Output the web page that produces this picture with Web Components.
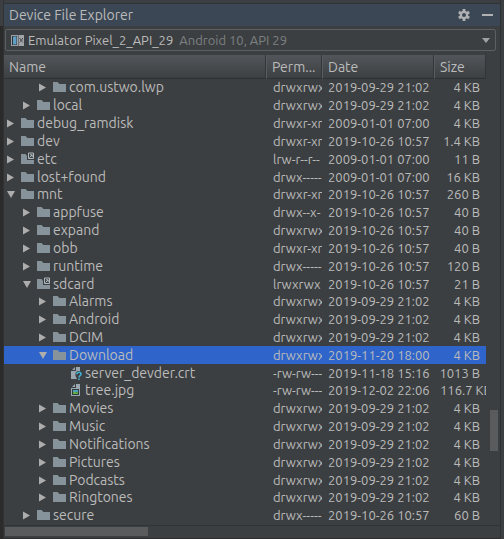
<!DOCTYPE html>
<html lang="en"><head><meta charset="utf-8"><title>Device File Explorer</title>
<style>
html,body{margin:0;height:100%;background:#3c3f41}
</style></head><body>
<device-explorer></device-explorer>
<script>
const FOLDER='<path d="M1 2h4.600l1.800 2H14v8H1z" fill="#87939a"/>';
const ICONS={
folder:FOLDER,
link:'<path d="M1 2h4.600l1.400 2V8h7v4H1z" fill="#87939a"/><path d="M8.500 1h5v5.500h-5z" fill="#3c3f41" stroke="#aeb9c0"/><path d="M9.500 5.500l2.500-2.500M10 2.800h2.200V5" stroke="#aeb9c0" fill="none"/>',
unknown:'<path d="M8 1h4v4H9.500L7.500 7v3L9 13H3V5h5z" fill="#9aa7b0"/><path d="M7 1v3H4z" fill="#9aa7b0"/><path d="M9 8.200c0-2.600 4-2.600 4 0 0 1.500-2 1.500-2 3.300M11 12.500V14" stroke="#3fb0d5" stroke-width="1.600" fill="none"/>',
image:'<path d="M8 1h4v12H3V5h5z" fill="#9aa7b0"/><path d="M7 1v3H4z" fill="#9aa7b0"/><path d="M4 6h7v6H4z" fill="#2f3b3d"/><path d="M5 7h5v2H5z" fill="#4a9fc0"/><path d="M5 11V9.500l1.500-1 2 1L10 9v2z" fill="#62b543"/>'};
class TreeNode extends HTMLElement{
 connectedCallback(){
  const d=+this.getAttribute('depth'),s=this.getAttribute('state'),i=this.getAttribute('icon');
  const arrow=s==='none'?'':`<button aria-label="${s==='open'?'Collapse':'Expand'}"><svg width="8" height="9" viewBox="0 0 8 9"><path d="${s==='open'?'M0 1h8L4 8z':'M0 .5v8l7-4z'}" fill="#adadad"/></svg></button>`;
  this.attachShadow({mode:'open'}).innerHTML=`<style>
  :host{display:flex;align-items:center;padding-left:${3+d*16}px;gap:5px;white-space:nowrap;font-size:14px}
  button,.sp{all:unset;width:8px;display:flex;flex:none}svg{flex:none;display:block}
  .row{display:flex;align-items:center;gap:2px}
  </style>${arrow||'<i class="sp"></i>'}<div class="row"><svg width="15" height="15" viewBox="0 0 15 15">${ICONS[i]}</svg><slot></slot></div>`;
 }}
class ToolHeader extends HTMLElement{
 connectedCallback(){this.attachShadow({mode:'open'}).innerHTML=`<style>
 :host{display:flex;align-items:center;justify-content:space-between;height:22px;padding:0 7px 0 5px;background:#3b4754;font-size:14px}
 h1{font:inherit;margin:0}div{display:flex;gap:12px}button{all:unset;display:flex}</style>
 <h1><slot></slot></h1><div><button aria-label="Settings"><svg width="12" height="12" viewBox="0 0 12 12"><g fill="#afb1b3"><path d="M4.600 0h2.800v12H4.600z"/><path d="M4.600 0h2.800v12H4.600z" transform="rotate(60 6 6)"/><path d="M4.600 0h2.800v12H4.600z" transform="rotate(120 6 6)"/><circle cx="6" cy="6" r="4.300"/></g><circle cx="6" cy="6" r="2" fill="#3b4754"/></svg></button>
 <button aria-label="Hide"><svg width="11" height="12" viewBox="0 0 11 12"><path d="M0 5h11v2H0z" fill="#afb1b3"/></svg></button></div>`}}
class DevicePicker extends HTMLElement{
 connectedCallback(){this.attachShadow({mode:'open'}).innerHTML=`<style>
 :host{display:block;padding:3px 4px 4px 1px}
 button{all:unset;box-sizing:border-box;width:100%;height:22px;display:flex;align-items:center;border:1px solid #5c6063;border-radius:2px;padding:0 5px;gap:4px;white-space:nowrap}
 .dim{color:#7d8082;flex:1;padding-left:2px}</style>
 <button aria-haspopup="listbox"><svg width="13" height="11" viewBox="0 0 13 11"><path d="M0 0h7v11H0z" fill="#9aa0a3"/><path d="M1 1h5v9H1z" fill="#2f3335"/><path d="M2 1.500h3.500v8H2z" fill="#5f9fc4"/><path d="M7.500 0H13v11H7.500z" fill="#a3a6a8"/><path d="M8.500 3l1 1m2.500-1l-1 1M8.500 7.500l1-1m2.500 1l-1-1" stroke="#4a4d4f"/><path d="M9 4h2.500v2.500H9z" fill="#5d6062"/></svg><slot></slot><span class="dim"><slot name="detail"></slot></span><svg width="8" height="5" viewBox="0 0 8 5"><path d="M0 0h8L4 5z" fill="#9fa1a3"/></svg></button>`}}
const A='drwxrwx',R='drwxr-xr',P='drwx-----',D=['2019-09-29 21:02','2009-01-01 07:00','2019-10-26 10:57'];
const ROWS=[
[2,'closed','folder','com.ustwo.lwp',A,D[0],'4 KB'],[1,'closed','folder','local',A,D[0],'4 KB'],
[0,'closed','folder','debug_ramdisk',R,D[1],'4 KB'],[0,'closed','folder','dev',R,D[2],'1.4 KB'],
[0,'closed','link','etc','lrw-r--r--',D[1],'11 B'],[0,'closed','folder','lost+found',P,D[1],'16 KB'],
[0,'open','folder','mnt',R,D[2],'260 B'],[1,'closed','folder','appfuse','drwx--x-',D[2],'40 B'],
[1,'closed','folder','expand',A,D[2],'40 B'],[1,'closed','folder','obb',R,D[2],'40 B'],
[1,'closed','folder','runtime',P,D[2],'120 B'],[1,'open','link','sdcard','lrwxrwx',D[2],'21 B'],
[2,'closed','folder','Alarms',A,D[0],'4 KB'],[2,'closed','folder','Android',A,D[0],'4 KB'],[2,'closed','folder','DCIM',A,D[0],'4 KB'],
[2,'open','folder','Download',A,'2019-11-20 18:00','4 KB'],
[3,'none','unknown','server_devder.crt','-rw-rw---','2019-11-18 15:16','1013 B'],[3,'none','image','tree.jpg','-rw-rw---','2019-12-02 22:06','116.7 KB'],
...['Movies','Music','Notifications','Pictures','Podcasts','Ringtones'].map(n=>[2,'closed','folder',n,A,D[0],'4 KB']),
[1,'closed','folder','secure',P,D[2],'60 B']];
class FileTable extends HTMLElement{
 connectedCallback(){this.attachShadow({mode:'open'}).innerHTML=`<style>
 :host{display:block;min-width:0;min-height:0}
 table{width:100%;height:100%;border-collapse:separate;border-spacing:0;table-layout:fixed}
 col.p{width:56px}col.d{width:112px}col.s{width:52px}
 th{font-weight:400;font-size:14px;line-height:18px;text-align:left;height:24px;padding:0 0 0 5px;background:linear-gradient(#52565a,#3d4042);border-bottom:1px solid #2e3133;border-right:1px solid #333638;box-sizing:border-box}
 th+th{border-left:1px solid #5a5d60}
 td{padding:0 0 0 7px;overflow:hidden;white-space:nowrap;line-height:17px}
 td:first-child{padding:0}td div{overflow:hidden}
 td:nth-child(3){padding-left:6px}
 td:last-child{text-align:right;padding:0 6px 0 0}td.wide:last-child{text-align:left;padding:0 0 0 6px}
 tr.sel td{background:#2f65ca}
 </style><table><colgroup><col><col class="p"><col class="d"><col class="s"></colgroup>
 <thead><tr><th>Name</th><th>Perm...</th><th>Date</th><th>Size</th></tr></thead><tbody>
 ${ROWS.map(r=>`<tr${r[3]==='Download'?' class="sel"':''}><td><tree-node depth="${r[0]}" state="${r[1]}" icon="${r[2]}">${r[3]}</tree-node></td><td><div>${r[4]}</div></td><td>${r[5]}</td><td${r[6].length>7?' class="wide"':''}><div>${r[6]}</div></td></tr>`).join('')}
 </tbody></table>`}}
class DeviceExplorer extends HTMLElement{
 connectedCallback(){this.attachShadow({mode:'open'}).innerHTML=`<style>
 :host{display:grid;grid-template-columns:4px minmax(0,1fr) 4px;height:100vh;font:13px "Ubuntu","Noto Sans",sans-serif;color:#bbbbbb;background:#3c3f41;overflow:hidden}
 .l{background:linear-gradient(#3c3f41 26px,#2b2b2b 26px);border-right:1px solid #323232}.r{border-left:1px solid #2e3032}
 main{display:flex;flex-direction:column;min-width:0;padding-top:3px}
 tool-header{border-top:1px solid #303234}
 .area{flex:1;min-height:0;display:grid;grid-template-columns:minmax(0,1fr) 14px}
 .v{display:flex;flex-direction:column;padding:0 2px 0 4px}.v:before{content:"";flex:356}.v i{flex:41;background:#595b5d}.v:after{content:"";flex:74}
 .h{padding:1px 1px 2px;border-top:1px solid #303234;border-bottom:1px solid #2b2d2f}.h i{display:block;height:9px;width:29%;background:#595b5d}
 </style><div class="l"></div><main><tool-header>Device File Explorer</tool-header>
 <device-picker>Emulator Pixel_2_API_29<span slot="detail">Android 10, API 29</span></device-picker>
 <div class="area"><file-table></file-table><div class="v"><i></i></div></div><div class="h"><i></i></div></main><div class="r"></div>`}}
customElements.define('tree-node',TreeNode);customElements.define('tool-header',ToolHeader);customElements.define('device-picker',DevicePicker);customElements.define('file-table',FileTable);customElements.define('device-explorer',DeviceExplorer);
</script></body></html>
